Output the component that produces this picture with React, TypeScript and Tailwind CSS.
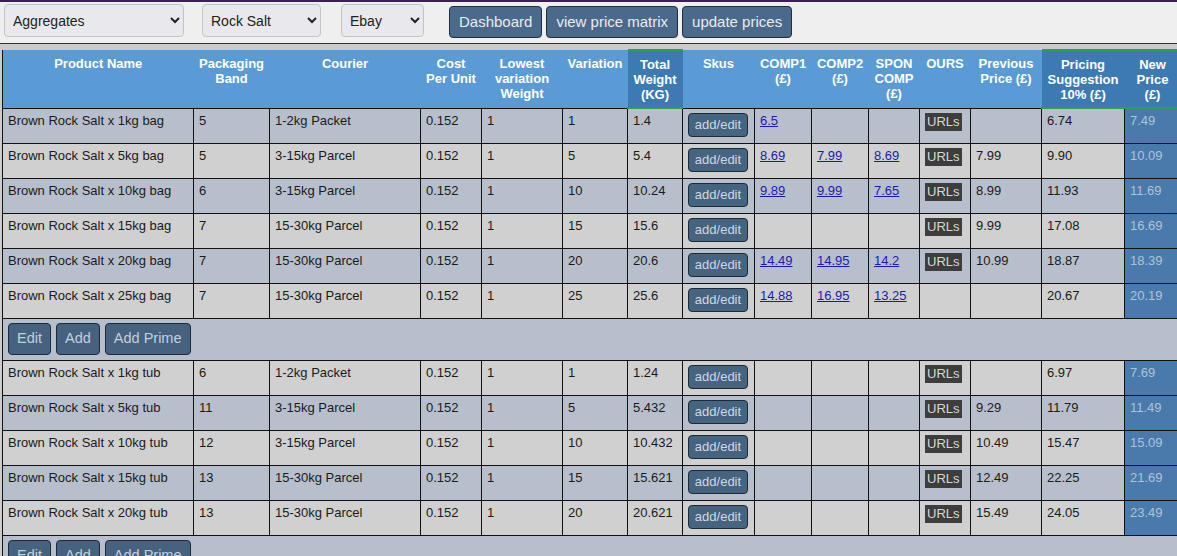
import React from "react";

type Row = {
  name: string;
  band: string;
  courier: string;
  variation: string;
  weight: string;
  comps: string[];
  urls: boolean;
  prev: string;
  sugg: string;
  price: string;
};

const BAGS: Row[] = [
  { name: "Brown Rock Salt x 1kg bag", band: "5", courier: "1-2kg Packet", variation: "1", weight: "1.4", comps: ["6.5", "", ""], urls: true, prev: "", sugg: "6.74", price: "7.49" },
  { name: "Brown Rock Salt x 5kg bag", band: "5", courier: "3-15kg Parcel", variation: "5", weight: "5.4", comps: ["8.69", "7.99", "8.69"], urls: true, prev: "7.99", sugg: "9.90", price: "10.09" },
  { name: "Brown Rock Salt x 10kg bag", band: "6", courier: "3-15kg Parcel", variation: "10", weight: "10.24", comps: ["9.89", "9.99", "7.65"], urls: true, prev: "8.99", sugg: "11.93", price: "11.69" },
  { name: "Brown Rock Salt x 15kg bag", band: "7", courier: "15-30kg Parcel", variation: "15", weight: "15.6", comps: ["", "", ""], urls: true, prev: "9.99", sugg: "17.08", price: "16.69" },
  { name: "Brown Rock Salt x 20kg bag", band: "7", courier: "15-30kg Parcel", variation: "20", weight: "20.6", comps: ["14.49", "14.95", "14.2"], urls: true, prev: "10.99", sugg: "18.87", price: "18.39" },
  { name: "Brown Rock Salt x 25kg bag", band: "7", courier: "15-30kg Parcel", variation: "25", weight: "25.6", comps: ["14.88", "16.95", "13.25"], urls: false, prev: "", sugg: "20.67", price: "20.19" },
];

const TUBS: Row[] = [
  { name: "Brown Rock Salt x 1kg tub", band: "6", courier: "1-2kg Packet", variation: "1", weight: "1.24", comps: ["", "", ""], urls: true, prev: "", sugg: "6.97", price: "7.69" },
  { name: "Brown Rock Salt x 5kg tub", band: "11", courier: "3-15kg Parcel", variation: "5", weight: "5.432", comps: ["", "", ""], urls: true, prev: "9.29", sugg: "11.79", price: "11.49" },
  { name: "Brown Rock Salt x 10kg tub", band: "12", courier: "3-15kg Parcel", variation: "10", weight: "10.432", comps: ["", "", ""], urls: true, prev: "10.49", sugg: "15.47", price: "15.09" },
  { name: "Brown Rock Salt x 15kg tub", band: "13", courier: "15-30kg Parcel", variation: "15", weight: "15.621", comps: ["", "", ""], urls: true, prev: "12.49", sugg: "22.25", price: "21.69" },
  { name: "Brown Rock Salt x 20kg tub", band: "13", courier: "15-30kg Parcel", variation: "20", weight: "20.621", comps: ["", "", ""], urls: true, prev: "15.49", sugg: "24.05", price: "23.49" },
];

// column widths read off the screenshot
const COLS = [191, 76, 151, 61, 81, 65, 55, 72, 57, 57, 51, 51, 71, 83, 56];

const HEADERS: { label: string[]; dark?: boolean }[] = [
  { label: ["Product Name"] },
  { label: ["Packaging", "Band"] },
  { label: ["Courier"] },
  { label: ["Cost", "Per Unit"] },
  { label: ["Lowest", "variation", "Weight"] },
  { label: ["Variation"] },
  { label: ["Total", "Weight", "(KG)"], dark: true },
  { label: ["Skus"] },
  { label: ["COMP1", "(£)"] },
  { label: ["COMP2", "(£)"] },
  { label: ["SPON", "COMP", "(£)"] },
  { label: ["OURS"] },
  { label: ["Previous", "Price (£)"] },
  { label: ["Pricing", "Suggestion", "10% (£)"], dark: true },
  { label: ["New", "Price", "(£)"], dark: true },
];

const td = "border border-[#111] align-top px-[5px] pt-[4px] pb-0 leading-[15px]";

function stripe(i: number) {
  return i % 2 === 0 ? "bg-[#b8bfcc]" : "bg-[#d0d0d0]";
}

function DataRow({ r, i }: { r: Row; i: number }) {
  return (
    <tr className={`h-[35px] ${stripe(i)}`}>
      <td className={td}>{r.name}</td>
      <td className={td}>{r.band}</td>
      <td className={td}>{r.courier}</td>
      <td className={td}>0.152</td>
      <td className={td}>1</td>
      <td className={td}>{r.variation}</td>
      <td className={td}>{r.weight}</td>
      <td className={`${td} pt-[3px]`}>
        <button className="w-[60px] h-[24px] rounded-[4px] border border-[#1d2a38] bg-[#46647f] text-[#cfd8e2] text-[13px] leading-none">
          add/edit
        </button>
      </td>
      {r.comps.map((c, k) => (
        <td key={k} className={td}>
          {c && (
            <a href="#" className="text-[#1a1ab8] underline">
              {c}
            </a>
          )}
        </td>
      ))}
      <td className={td}>
        {r.urls && (
          <span className="inline-block bg-[#3d3d3d] text-[#d8d8d8] px-[2px] leading-[18px]">URLs</span>
        )}
      </td>
      <td className={td}>{r.prev}</td>
      <td className={td}>{r.sugg}</td>
      <td className={`${td} bg-[#4a7aab] text-[#aec3da]`}>{r.price}</td>
    </tr>
  );
}

function ActionRow({ i }: { i: number }) {
  return (
    <tr className={`h-[42px] ${stripe(i)}`}>
      <td colSpan={15} className="border border-[#111] px-[5px] py-[4px]">
        <div className="flex gap-[5px]">
          {["Edit", "Add", "Add Prime"].map((b) => (
            <button
              key={b}
              className="h-[32px] px-[8px] rounded-[4px] border border-[#1d2a38] bg-[#46627f] text-[#c5cfd9] text-[14.5px]"
            >
              {b}
            </button>
          ))}
        </div>
      </td>
    </tr>
  );
}

export default function App() {
  const select = "h-[33px] rounded-[4px] border border-[#c4c4c4] bg-[#e9e9ed] text-[14px] text-[#222] pl-[4px]";
  const topBtn = "h-[32px] px-[9px] rounded-[4px] border border-[#1f2d3d] bg-[#4b6a8b] text-[#e8ecf0] text-[15px]";

  return (
    <div className="h-[556px] overflow-hidden bg-[#cbcbcb] font-['Liberation_Sans',Arial,sans-serif] text-[13px] text-[#1a1a1a]">
      <div className="h-[2px] bg-[#3c1f55]" />
      <div className="h-[42px] bg-[#efefef] border-b border-[#333] flex items-start pt-[2px] pl-[4px]">
        <select className={`${select} w-[180px]`} defaultValue="Aggregates">
          <option>Aggregates</option>
        </select>
        <select className={`${select} w-[119px] ml-[18px]`} defaultValue="Rock Salt">
          <option>Rock Salt</option>
        </select>
        <select className={`${select} w-[83px] ml-[20px]`} defaultValue="Ebay">
          <option>Ebay</option>
        </select>
        <div className="flex gap-[4px] ml-[25px] mt-[2px]">
          <button className={topBtn}>Dashboard</button>
          <button className={topBtn}>view price matrix</button>
          <button className={topBtn}>update prices</button>
        </div>
      </div>
      <div className="pt-[5px] pl-[2px] overflow-hidden">
        <table className="table-fixed border-collapse w-[1178px] border-l border-[#111]">
          <colgroup>
            {COLS.map((w, k) => (
              <col key={k} style={{ width: w }} />
            ))}
          </colgroup>
          <thead>
            <tr className="h-[58px]">
              {HEADERS.map((h, k) => (
                <th
                  key={k}
                  className={`align-top pt-[6px] px-[2px] font-bold text-white leading-[15px] ${
                    h.dark
                      ? "bg-[#3d7ab4] border-t-2 border-b-2 border-[#2f9d58]"
                      : "bg-[#5b9bd5]"
                  }`}
                >
                  {h.label.map((l) => (
                    <div key={l}>{l}</div>
                  ))}
                </th>
              ))}
            </tr>
          </thead>
          <tbody>
            {BAGS.map((r, i) => (
              <DataRow key={r.name} r={r} i={i} />
            ))}
            <ActionRow i={6} />
            {TUBS.map((r, i) => (
              <DataRow key={r.name} r={r} i={i + 7} />
            ))}
            <ActionRow i={12} />
          </tbody>
        </table>
      </div>
    </div>
  );
}
